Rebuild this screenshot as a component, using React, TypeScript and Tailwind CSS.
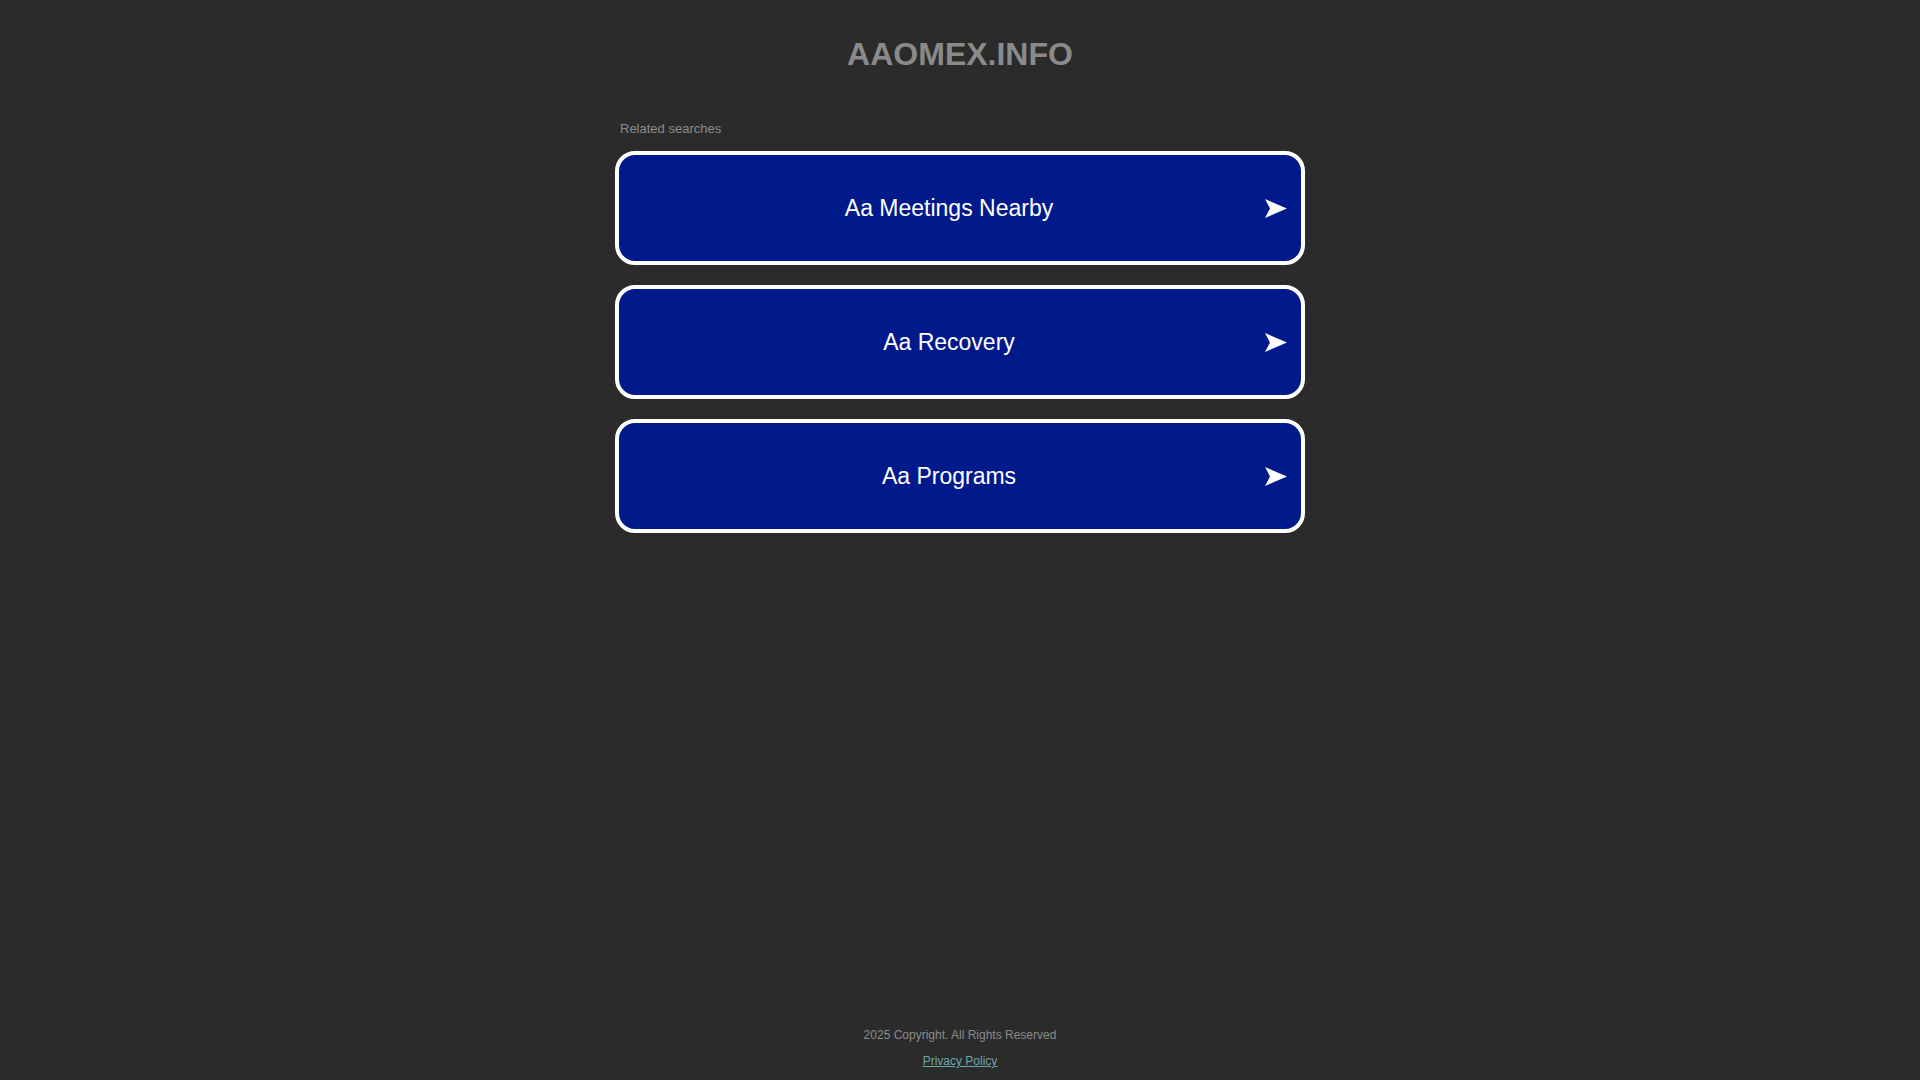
const SEARCHES = ['Aa Meetings Nearby', 'Aa Recovery', 'Aa Programs'];

function ArrowHead() {
  return (
    <svg width="22" height="19" viewBox="0 0 22 19" className="shrink-0">
      <polygon points="0,0 22,9.5 0,19 5,9.5" fill="#ffffff" />
    </svg>
  );
}

export default function App() {
  return (
    <div className="min-h-screen bg-[#2b2b2b] flex flex-col font-['Liberation_Sans',Arial,sans-serif]">
      <main className="flex-1 w-[690px] mx-auto">
        <h1 className="mt-[36px] text-center text-[32px] leading-[37px] font-bold text-[#8a8a8a]">
          AAOMEX.INFO
        </h1>
        <div className="mt-[48px] pl-[5px] text-[13px] leading-[15px] text-[#8c8c8c]">Related searches</div>
        <div className="mt-[15px] flex flex-col gap-[20px]">
          {SEARCHES.map(s => (
            <a
              key={s}
              href="#"
              className="h-[114px] flex items-center px-[14px] rounded-[20px] border-4 border-white bg-[#011a8b] text-white"
            >
              <span className="flex-1 text-center text-[23px] leading-[27px]">{s}</span>
              <ArrowHead />
            </a>
          ))}
        </div>
      </main>
      <footer className="pb-[12px] flex flex-col items-center gap-[12px] text-[12px] leading-[14px]">
        <span className="text-[#8a8a8a]">2025 Copyright. All Rights Reserved</span>
        <a href="#" className="text-[#6ea6a9] underline">Privacy Policy</a>
      </footer>
    </div>
  );
}
